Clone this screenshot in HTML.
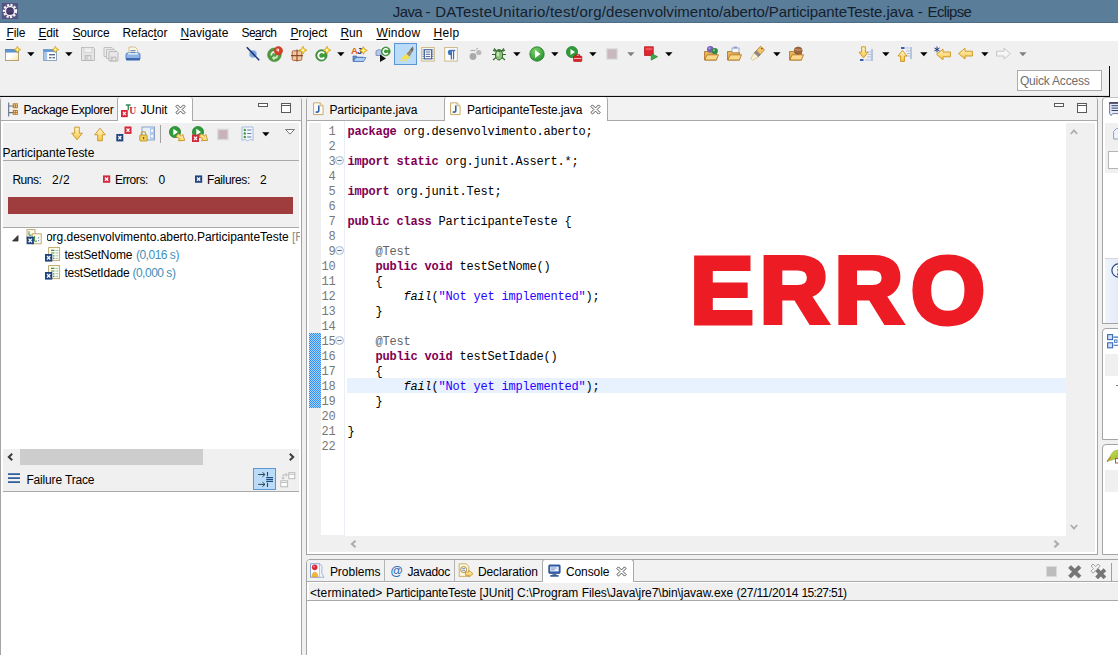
<!DOCTYPE html>
<html><head><meta charset="utf-8"><title>Java - Eclipse</title>
<style>
*{box-sizing:border-box;margin:0;padding:0}
html,body{width:1118px;height:655px;overflow:hidden;background:#f0f0f0}
body{position:relative;font-family:"Liberation Sans",sans-serif;font-size:12px;color:#000}
.a{position:absolute}
svg{overflow:visible}
.t{position:absolute;white-space:nowrap;line-height:16px;height:16px}
u{text-decoration:underline;text-underline-offset:1.5px;text-decoration-thickness:1px}
.c{position:absolute;white-space:pre;font-family:"Liberation Mono",monospace;font-size:12px;letter-spacing:-0.2px;line-height:15px;height:15px;color:#000}
.c b{color:#7f0055}
.c i{color:#000}
.c s{color:#2a00ff;text-decoration:none}
.c em{color:#646464;font-style:normal}
.n{color:#787878}
</style></head><body>
<svg width="0" height="0" style="position:absolute"><defs><linearGradient id="gy" x1="0" y1="0" x2="0" y2="1"><stop offset="0" stop-color="#fff8cc"/><stop offset="1" stop-color="#f7c544"/></linearGradient></defs></svg>
<!-- title -->
<div class="a" style="left:0px;top:0px;width:1118px;height:23px;background:#5a7d9a;border-bottom:1px solid #4d6d86"></div>
<svg class="a" style="left:2px;top:3px;" width="16" height="16" viewBox="0 0 19 19"><rect x="0" y="0" width="19" height="19" fill="#54467f" opacity=".8"/><circle cx="9.5" cy="9.5" r="7.2" fill="none" stroke="#f4f4f4" stroke-width="2.6" stroke-dasharray="2.6 1.6"/><circle cx="9.5" cy="9.5" r="6.2" fill="#efefef"/><circle cx="9.5" cy="9.5" r="4.6" fill="#3a2f5e"/><path d="M5.5 8.5h8M5.5 10.5h8" stroke="#6a5a9a" stroke-width=".8"/></svg>
<div class="t" style="left:392.8px;top:2.5px;font-size:15px;color:#15202b;line-height:18px;height:18px;"><span style="letter-spacing:-0.612px">Java </span><span style="letter-spacing:0.214px">- </span><span style="letter-spacing:0.211px">DATesteUnitario/test/org/</span><span style="letter-spacing:0.028px">desenvolvimento</span><span style="letter-spacing:-0.158px">/aberto</span><span style="letter-spacing:-0.087px">/ParticipanteTeste.java </span><span style="letter-spacing:0.364px">- </span><span style="letter-spacing:-0.680px">Eclipse</span></div>
<!-- menu -->
<div class="a" style="left:0px;top:23px;width:1118px;height:18px;background:#fff"></div>
<div class="t" style="left:6.4px;top:25px;letter-spacing:-0.090px;"><u>F</u>ile</div>
<div class="t" style="left:38.4px;top:25px;letter-spacing:-0.176px;"><u>E</u>dit</div>
<div class="t" style="left:72.4px;top:25px;letter-spacing:-0.174px;"><u>S</u>ource</div>
<div class="t" style="left:122.4px;top:25px;letter-spacing:-0.047px;">Refac<u>t</u>or</div>
<div class="t" style="left:180.4px;top:25px;letter-spacing:0.078px;"><u>N</u>avigate</div>
<div class="t" style="left:241.4px;top:25px;letter-spacing:-0.508px;">Se<u>a</u>rch</div>
<div class="t" style="left:290.4px;top:25px;letter-spacing:-0.051px;"><u>P</u>roject</div>
<div class="t" style="left:340.4px;top:25px;letter-spacing:-0.010px;"><u>R</u>un</div>
<div class="t" style="left:376.4px;top:25px;letter-spacing:0.219px;"><u>W</u>indow</div>
<div class="t" style="left:433.4px;top:25px;letter-spacing:0.328px;"><u>H</u>elp</div>
<!-- toolbar -->
<div class="a" style="left:394px;top:43px;width:23px;height:22px;background:#badcf9;border:1px solid #5b96d2"></div>
<svg class="a" style="left:397.5px;top:46px;" width="16" height="16" viewBox="0 0 16 16"><path d="M14.8 .6L8.4 8l3.2 2.8L15.6 3.2z" fill="#948a7c"/><path d="M14.8 .6l-2.8 3.2 2.9 2z" fill="#6d665e"/><path d="M8.4 8L2.6 12.6l7.6 1 1.6-2.8z" fill="#f6e14a"/><path d="M.8 14.6q4-1 8 .2" stroke="#eadf80" stroke-width="1.4" fill="none"/></svg>
<svg class="a" style="left:5px;top:46px;" width="16" height="16" viewBox="0 0 16 16"><defs><linearGradient id="gnw" x1="0" y1="0" x2="1" y2="1"><stop offset=".5" stop-color="#fff"/><stop offset="1" stop-color="#f6e3a6"/></linearGradient></defs><rect x=".5" y="3.5" width="13" height="11" fill="url(#gnw)" stroke="#b9a16a"/><rect x=".5" y="3.5" width="13" height="2.6" fill="#5e96d6" stroke="#4a7fc0" stroke-width=".6"/><path d="M12.4 3.6m0-3.4l1.1 2.3 2.3 1.1-2.3 1.1-1.1 2.3-1.1-2.3-2.3-1.1 2.3-1.1z" fill="#fbdf45" stroke="#c79a1e" stroke-width=".7"/><circle cx="12.4" cy="3.6" r=".9" fill="#fffbe0"/></svg>
<svg class="a" style="left:43px;top:46px;" width="16" height="16" viewBox="0 0 16 16"><rect x=".5" y="3.5" width="13" height="11" fill="#fff" stroke="#8fa6c4"/><rect x=".5" y="3.5" width="13" height="2.4" fill="#5e96d6"/><rect x="1" y="6" width="3.2" height="8" fill="#a9c6ea"/><rect x="6" y="8" width="6" height="1.4" fill="#5a6f8f"/><rect x="6" y="11" width="2.5" height="1.4" fill="#5a6f8f"/><rect x="9.5" y="11" width="2.5" height="1.4" fill="#5a6f8f"/><path d="M12.4 3.6m0-3.4l1.1 2.3 2.3 1.1-2.3 1.1-1.1 2.3-1.1-2.3-2.3-1.1 2.3-1.1z" fill="#fbdf45" stroke="#c79a1e" stroke-width=".7"/><circle cx="12.4" cy="3.6" r=".9" fill="#fffbe0"/></svg>
<svg class="a" style="left:79.5px;top:46px;" width="16" height="16" viewBox="0 0 16 16"><path d="M1.5 1.5h12l1 1v12h-13z" fill="#e7e7e7" stroke="#bababa"/><rect x="4" y="1.8" width="8" height="5" fill="#efefef" stroke="#c2c2c2" stroke-width=".6"/><rect x="5" y="9.5" width="6" height="5" fill="#d0d0d0" stroke="#b0b0b0" stroke-width=".6"/><rect x="8.5" y="10.5" width="1.6" height="3" fill="#f0f0f0"/></svg>
<svg class="a" style="left:103px;top:46px;" width="16" height="16" viewBox="0 0 16 16"><path d="M1 1.5h8l1 1v8h-9z" fill="#eaeaea" stroke="#c0c0c0"/><path d="M3.5 3.5h8l1 1v8h-9z" fill="#eaeaea" stroke="#c0c0c0"/><path d="M6 5.5h8l1 1v8.5h-9z" fill="#e7e7e7" stroke="#bababa"/><rect x="8" y="11" width="5" height="4" fill="#cfcfcf" stroke="#b0b0b0" stroke-width=".6"/><rect x="10.5" y="12" width="1.4" height="2.4" fill="#f0f0f0"/></svg>
<svg class="a" style="left:124.5px;top:46px;" width="16" height="16" viewBox="0 0 16 16"><path d="M4 1h6l2.5 2.5V8H4z" fill="#fdf6e3" stroke="#c9b27a" stroke-width=".8"/><rect x="5.5" y="4" width="5" height="1.2" fill="#6a8fc4"/><rect x="5.5" y="6" width="5" height="1.2" fill="#6a8fc4"/><path d="M1 8.5q0-1.5 1.5-1.5h11q1.5 0 1.5 1.5V13H1z" fill="#8fb4e6" stroke="#4571b3" stroke-width=".8"/><rect x="1" y="12" width="14" height="2.6" rx="1.2" fill="#3e68ad"/><rect x="3.2" y="7" width="9.6" height="1.6" fill="#dfeaf8"/></svg>
<svg class="a" style="left:245px;top:46px;" width="16" height="16" viewBox="0 0 16 16"><circle cx="8" cy="8" r="3.6" fill="#7aa7d8" stroke="#9fc0e6" stroke-width=".8"/><path d="M1.8 1.2L14.2 14.2" stroke="#1c2f7a" stroke-width="1.5"/></svg>
<svg class="a" style="left:267px;top:46px;" width="16" height="16" viewBox="0 0 16 16"><circle cx="7.4" cy="8.8" r="6.8" fill="#4f9a3a" stroke="#3c7f2b" stroke-width=".6"/><path d="M3.4 9.4a4 4 0 0 1 4-4.4v-1.4l2.6 2.4-2.6 2.4V7a2.2 2.2 0 0 0-2.2 2.4z" fill="#e8f4e0"/><path d="M11.4 8.6a4 4 0 0 1-4 4.4v1.4L4.8 12l2.6-2.4V11a2.2 2.2 0 0 0 2.2-2.4z" fill="#cfe8c0"/><circle cx="11.4" cy="4.8" r="4.2" fill="#d8402a" stroke="#b02a18" stroke-width=".5"/><circle cx="10.6" cy="3.8" r="1.5" fill="#f7a08c"/><path d="M11.4 3v2.6" stroke="#fff" stroke-width=".9"/></svg>
<svg class="a" style="left:291px;top:46px;" width="16" height="16" viewBox="0 0 16 16"><rect x="1.2" y="4.8" width="9.6" height="9.6" rx="1.2" fill="#f0c9a0" stroke="#b0683a" stroke-width="1"/><path d="M6 3.6v12M0 9.6h12" stroke="#8a4a2a" stroke-width="1.1"/><path d="M12 4.2m0-3.9l1.3 2.6 2.6 1.3-2.6 1.3-1.3 2.6-1.3-2.6-2.6-1.3 2.6-1.3z" fill="#fbdf45" stroke="#c79a1e" stroke-width=".7"/><circle cx="12" cy="4.2" r="1" fill="#fffbe0"/></svg>
<svg class="a" style="left:314.5px;top:46px;" width="16" height="16" viewBox="0 0 16 16"><circle cx="6.4" cy="9.4" r="5.6" fill="#3f9a3c" stroke="#2c7a2d" stroke-width=".8"/><path d="M9.2 7.4A3.3 3.3 0 1 0 9.2 11.4" fill="none" stroke="#fff" stroke-width="1.9"/><path d="M12 4.2m0-3.9l1.3 2.6 2.6 1.3-2.6 1.3-1.3 2.6-1.3-2.6-2.6-1.3 2.6-1.3z" fill="#fbdf45" stroke="#c79a1e" stroke-width=".7"/><circle cx="12" cy="4.2" r="1" fill="#fffbe0"/></svg>
<svg class="a" style="left:351px;top:46px;" width="16" height="16" viewBox="0 0 16 16"><text x="0" y="8.4" font-family="Liberation Sans,sans-serif" font-weight="bold" font-size="9.5" fill="#e0601a">A<tspan fill="#26407a" dx="-.8">J</tspan></text><path d="M2 10h3.5l1 1.2H12.4V15.4H2z" fill="#5d8fd4" stroke="#3b69b0" stroke-width=".7"/><path d="M2.4 15.4l2.4-3.8H15l-2.4 3.8z" fill="#b4d2f5" stroke="#3b69b0" stroke-width=".7"/><path d="M12.4 4.4m0-3.9l1.3 2.6 2.6 1.3-2.6 1.3-1.3 2.6-1.3-2.6-2.6-1.3 2.6-1.3z" fill="#fbdf45" stroke="#c79a1e" stroke-width=".7"/><circle cx="12.4" cy="4.4" r="1" fill="#fffbe0"/></svg>
<svg class="a" style="left:375px;top:46px;" width="16" height="16" viewBox="0 0 16 16"><path d="M1 5l3-1.6 3 1.6v4.5H1z" fill="#b7c7e6" stroke="#6e86bd" stroke-width=".8"/><path d="M5 8.5l6 4-6 3.5z" fill="#111"/><circle cx="10.8" cy="5.4" r="4.4" fill="#3f9a3c" stroke="#2c7a2d" stroke-width=".6"/><path d="M12.9 3.9A2.6 2.6 0 1 0 12.9 6.9" fill="none" stroke="#fff" stroke-width="1.5"/></svg>
<svg class="a" style="left:468px;top:46px;" width="16" height="16" viewBox="0 0 16 16"><circle cx="5" cy="10.5" r="3.4" fill="#a9a9a9"/><circle cx="10.8" cy="6.5" r="2.6" fill="#b9b9b9"/><path d="M2.5 4.5h5" stroke="#b0b0b0" stroke-width="1.3"/><path d="M8 3.5l2-1.5" stroke="#b9b9b9" stroke-width="1.2"/></svg>
<svg class="a" style="left:490.5px;top:46px;" width="16" height="16" viewBox="0 0 16 16"><path d="M3 2.5l3 3M13 2.5l-3 3M1 8.5h4M15 8.5h-4M2 14l3.5-3M14 14l-3.5-3M4.5 5.5L2 4M11.5 5.5l2.5-1.5" stroke="#2f6a2a" stroke-width="1.1" fill="none"/><ellipse cx="8" cy="9" rx="3.6" ry="5" fill="#8fc27a" stroke="#2f6a2a" stroke-width="1"/><ellipse cx="8" cy="4.6" rx="2.2" ry="1.6" fill="#3e7a35"/><ellipse cx="7" cy="8" rx="1.2" ry="2.4" fill="#c6e3b8"/></svg>
<svg class="a" style="left:528.5px;top:46px;" width="16" height="16" viewBox="0 0 16 16"><defs><radialGradient id="grn" cx=".4" cy=".3" r=".8"><stop offset="0" stop-color="#7fd06a"/><stop offset="1" stop-color="#1e8a2a"/></radialGradient></defs><circle cx="8" cy="8" r="7.2" fill="url(#grn)" stroke="#1f7a28" stroke-width=".8"/><path d="M6 4l5.5 4L6 12z" fill="#fff"/></svg>
<svg class="a" style="left:566px;top:46px;" width="16" height="16" viewBox="0 0 16 16"><circle cx="6" cy="6" r="5.6" fill="#2f9a38" stroke="#1f7a28" stroke-width=".7"/><path d="M4.5 3l4.5 3-4.5 3z" fill="#fff"/><rect x="7.5" y="10" width="8.3" height="5.5" rx=".8" fill="#d8262a" stroke="#a01418" stroke-width=".6"/><path d="M9.8 10V8.8h3.6V10" fill="none" stroke="#c01c20" stroke-width="1.1"/><rect x="8" y="12" width="7.2" height="1" fill="#f3b0b0"/></svg>
<svg class="a" style="left:604px;top:46px;" width="16" height="16" viewBox="0 0 16 16"><rect x="2.8" y="2.8" width="10.4" height="10.4" fill="#c7b9bd" stroke="#dcdcdc" stroke-width="1.2"/></svg>
<svg class="a" style="left:644px;top:46px;" width="16" height="16" viewBox="0 0 16 16"><rect x=".6" y=".8" width="8.6" height="8.6" fill="#e0252e" stroke="#b8141c" stroke-width=".8"/><rect x="1.6" y="1.8" width="6.6" height="2.4" fill="#f0555c"/><path d="M7.2 7.4l6.4 3.3-6.4 3.5z" fill="#3aa84a" stroke="#1f7a28" stroke-width=".6"/></svg>
<svg class="a" style="left:858px;top:46px;" width="16" height="16" viewBox="0 0 16 16"><path d="M14 3v12" stroke="#7f9cc8" stroke-width="1"/><path d="M9 6h4M10 8.5h3M9 11h4" stroke="#a9c0e2" stroke-width="1"/><rect x="2" y="13" width="3.5" height="2" fill="#3b5fa8"/><path d="M7 14h6" stroke="#a9c0e2"/><path d="M3.6 .8h3.8v5.4h2.6l-4.5 5.6L1 6.2h2.6z" fill="url(#gy)" stroke="#c8921c" stroke-width=".9" stroke-linejoin="round"/></svg>
<svg class="a" style="left:896.5px;top:46px;" width="16" height="16" viewBox="0 0 16 16"><path d="M14 1v12" stroke="#7f9cc8" stroke-width="1"/><path d="M9 5h4M10 7.5h3M9 10h4" stroke="#a9c0e2" stroke-width="1"/><rect x="4" y="1" width="3.5" height="2" fill="#3b5fa8"/><path d="M8.5 2h4" stroke="#a9c0e2"/><path d="M3.6 15.4h3.8V10h2.6L5.5 4.4 1 10h2.6z" fill="url(#gy)" stroke="#c8921c" stroke-width=".9" stroke-linejoin="round"/></svg>
<svg class="a" style="left:934px;top:46px;" width="16" height="16" viewBox="0 0 16 16"><path d="M9 3l-6.4 5.4 6.4 5.4v-3h7.4v-4.8h-7.4z" fill="url(#gy)" stroke="#c8921c" stroke-width=".9" stroke-linejoin="round"/><path d="M3 .5v6M.4 2l5.2 3M5.6 2L.4 5" stroke="#243c78" stroke-width="1"/></svg>
<svg class="a" style="left:958px;top:46px;" width="16" height="16" viewBox="0 0 16 16"><path d="M7 2.2l-6.4 5.4 6.4 5.4v-3h7.4v-4.8h-7.4z" fill="url(#gy)" stroke="#c8921c" stroke-width=".9" stroke-linejoin="round"/></svg>
<svg class="a" style="left:996px;top:46px;" width="16" height="16" viewBox="0 0 16 16"><path d="M8 2.2l6.4 5.4-6.4 5.4v-3h-7.4v-4.8h7.4z" fill="#f6f6f6" stroke="#c2c2c2" stroke-width=".9" stroke-linejoin="round"/></svg>
<svg class="a" style="left:703px;top:45px;" width="16" height="16" viewBox="0 0 16 16"><path d="M1.5 6.5h4l1.2 1.3h6.8V15H1.5z" fill="#e9b55a" stroke="#a96f1e" stroke-width=".8"/><path d="M1.8 15l2.3-5.2H15.5L13.4 15z" fill="#fbd88a" stroke="#a96f1e" stroke-width=".8"/><circle cx="7.3" cy="4.2" r="3.3" fill="#7a5fb5"/><circle cx="6.5" cy="3.3" r="1.1" fill="#b6a3de"/><circle cx="11.8" cy="6" r="3.1" fill="#2f8a4a"/><circle cx="11" cy="5.2" r="1" fill="#8fd0a0"/></svg>
<svg class="a" style="left:725.5px;top:45px;" width="16" height="16" viewBox="0 0 16 16"><rect x="6" y="3" width="7" height="6" fill="#f4f7fc" stroke="#8a9cc0" stroke-width=".8"/><rect x="7.5" y="1.6" width="3.5" height="1.8" fill="#8a9cc0"/><path d="M1.5 6.5h4l1.2 1.3h6.8V15H1.5z" fill="#e9b55a" stroke="#a96f1e" stroke-width=".8"/><path d="M1.8 15l2.3-5.2H15.5L13.4 15z" fill="#fbd88a" stroke="#a96f1e" stroke-width=".8"/></svg>
<svg class="a" style="left:750px;top:45px;" width="16" height="16" viewBox="0 0 16 16"><path d="M10.5 1.2l4 3.6-6.3 7-4-3.6z" fill="#f4c46a" stroke="#b07a28" stroke-width=".8"/><path d="M6.2 5.8l4 3.6-2 2.4-4-3.6z" fill="#8c8c8c" stroke="#666" stroke-width=".5"/><path d="M4.2 8.2l4 3.6-5.6 3.4-1.8-1.6z" fill="#fbf4d8" stroke="#c9b27a" stroke-width=".7"/><circle cx="11.8" cy="3.6" r=".8" fill="#7a4a10"/></svg>
<svg class="a" style="left:787.5px;top:45px;" width="16" height="16" viewBox="0 0 16 16"><path d="M1.5 6.5h4l1.2 1.3h6.8V15H1.5z" fill="#e9b55a" stroke="#a96f1e" stroke-width=".8"/><path d="M1.8 15l2.3-5.2H15.5L13.4 15z" fill="#fbd88a" stroke="#a96f1e" stroke-width=".8"/><ellipse cx="10.2" cy="5.6" rx="4" ry="3.6" fill="#a0673c" stroke="#7a4722" stroke-width=".6"/><path d="M7 4.5q3 1 6.8.2" stroke="#d9a77c" stroke-width=".9" fill="none"/></svg>
<svg class="a" style="left:421px;top:47px;" width="14" height="14.6" viewBox="0 0 15 16"><rect x=".6" y=".6" width="13.8" height="14.8" fill="#fdfbf3" stroke="#cdb98a" stroke-width="1.1"/><rect x="3.5" y="3" width="8" height="10" fill="#fff" stroke="#3a5a94" stroke-width="1.2"/><path d="M5 5.5h5M5 8h5M5 10.5h5" stroke="#3a5a94" stroke-width="1"/><path d="M2.2 2.5v11M12.8 2.5v11" stroke="#3a5a94" stroke-width="1" stroke-dasharray="1.2 1.2"/></svg>
<svg class="a" style="left:444px;top:47px;" width="14" height="14.6" viewBox="0 0 15 16"><rect x=".6" y=".6" width="13.8" height="14.8" fill="#fff" stroke="#cdb98a" stroke-width="1.1"/><path d="M6.8 3h5.4v1.6h-1.2v9H9.6v-9H8.6v9H7.2V9a3 3 0 0 1-.4-6z" fill="#3f74b8"/></svg>
<svg class="a" style="left:27px;top:52px;" width="8" height="5" viewBox="0 0 8 5"><path d="M0.2 0.3h7.3L3.85 4.2z" fill="#000"/></svg>
<svg class="a" style="left:65px;top:52px;" width="8" height="5" viewBox="0 0 8 5"><path d="M0.2 0.3h7.3L3.85 4.2z" fill="#000"/></svg>
<svg class="a" style="left:337px;top:52px;" width="8" height="5" viewBox="0 0 8 5"><path d="M0.2 0.3h7.3L3.85 4.2z" fill="#000"/></svg>
<svg class="a" style="left:513px;top:52px;" width="8" height="5" viewBox="0 0 8 5"><path d="M0.2 0.3h7.3L3.85 4.2z" fill="#000"/></svg>
<svg class="a" style="left:551px;top:52px;" width="8" height="5" viewBox="0 0 8 5"><path d="M0.2 0.3h7.3L3.85 4.2z" fill="#000"/></svg>
<svg class="a" style="left:589px;top:52px;" width="8" height="5" viewBox="0 0 8 5"><path d="M0.2 0.3h7.3L3.85 4.2z" fill="#000"/></svg>
<svg class="a" style="left:665px;top:52px;" width="8" height="5" viewBox="0 0 8 5"><path d="M0.2 0.3h7.3L3.85 4.2z" fill="#000"/></svg>
<svg class="a" style="left:773px;top:52px;" width="8" height="5" viewBox="0 0 8 5"><path d="M0.2 0.3h7.3L3.85 4.2z" fill="#000"/></svg>
<svg class="a" style="left:882px;top:52px;" width="8" height="5" viewBox="0 0 8 5"><path d="M0.2 0.3h7.3L3.85 4.2z" fill="#000"/></svg>
<svg class="a" style="left:920px;top:52px;" width="8" height="5" viewBox="0 0 8 5"><path d="M0.2 0.3h7.3L3.85 4.2z" fill="#000"/></svg>
<svg class="a" style="left:981px;top:52px;" width="8" height="5" viewBox="0 0 8 5"><path d="M0.2 0.3h7.3L3.85 4.2z" fill="#000"/></svg>
<svg class="a" style="left:627px;top:52px;" width="8" height="5" viewBox="0 0 8 5"><path d="M0.2 0.3h7.3L3.85 4.2z" fill="#808080"/></svg>
<svg class="a" style="left:1019px;top:52px;" width="8" height="5" viewBox="0 0 8 5"><path d="M0.2 0.3h7.3L3.85 4.2z" fill="#808080"/></svg>
<div class="a" style="left:1017px;top:70px;width:85px;height:21px;background:#fff;border:1px solid #ababab"></div>
<div class="t" style="left:1020px;top:72.5px;color:#6d6d6d;letter-spacing:-0.211px;">Quick Access</div>
<div class="a" style="left:0px;top:95px;width:1109px;height:1px;background:#dcdcdc"></div>
<div class="a" style="left:0px;top:96px;width:1110px;height:1px;background:#0c0c0c"></div>
<div class="a" style="left:1109px;top:66px;width:1px;height:31px;background:#0c0c0c"></div>
<!-- left: junit view -->
<div class="a" style="left:0px;top:97px;width:302px;height:560px;background:#fff;border:1px solid #a4a4a4;border-top:none;border-radius:4px 4px 0 0"></div>
<div class="a" style="left:3px;top:123px;width:296px;height:369px;background:#f0f0f0"></div>
<div class="a" style="left:1px;top:97px;width:300px;height:23px;background:#f2f2f2;border-radius:3px 3px 0 0"></div>
<div class="a" style="left:1px;top:120px;width:300px;height:1px;background:#a9a9a9"></div>
<div class="a" style="left:117px;top:97px;width:76px;height:24px;background:#fff;border:1px solid #a9a9a9;border-top:none;border-bottom:none;border-radius:3px 3px 0 0"></div>
<svg class="a" style="left:6.8px;top:101.6px;" width="13" height="15" viewBox="0 0 12 14"><path d="M1.5 .5v13M1.5 3.7h4M1.5 9.9h4" stroke="#5f6f86" stroke-width="1" fill="none"/><rect x="5.3" y="1.2" width="4.8" height="4.6" fill="#b87a2c"/><path d="M6.3 2.2h1v1h-1zM8.2 2.2h1v1h-1zM6.3 4h1v1h-1zM8.2 4h1v1h-1z" fill="#f6dca0"/><rect x="5.3" y="7.4" width="4.8" height="4.6" fill="#b87a2c"/><path d="M6.3 8.4h1v1h-1zM8.2 8.4h1v1h-1zM6.3 10.2h1v1h-1zM8.2 10.2h1v1h-1z" fill="#f6dca0"/></svg>
<div class="t" style="left:23.4px;top:101.5px;letter-spacing:-0.295px;">Package Explorer</div>
<svg class="a" style="left:121px;top:103.5px;" width="15.5" height="15.5" viewBox="0 0 16 16"><text x="8.6" y="10.5" font-family="Liberation Serif,serif" font-weight="bold" font-size="10" fill="#c4284a">U</text><path d="M5 1h5M7.5 1v5.5" stroke="#2f8a5a" stroke-width="1.4"/><rect x="0" y="6.2" width="7" height="7.4" fill="#d3283a"/><path d="M2 8.2l3 3.4m0-3.4l-3 3.4" stroke="#fff" stroke-width="1.2"/></svg>
<div class="t" style="left:140.4px;top:101.5px;letter-spacing:-0.069px;">JUnit</div>
<svg class="a" style="left:174.5px;top:103.5px;" width="11" height="11" viewBox="0 0 11 11"><path d="M.9 2.5L2.5 .9 5.5 3.9 8.5 .9 10.1 2.5 7.1 5.5 10.1 8.5 8.5 10.1 5.5 7.1 2.5 10.1 .9 8.5 3.9 5.5z" fill="#fff" stroke="#484848" stroke-width=".95"/></svg>
<div class="a" style="left:258px;top:103px;width:10px;height:4px;border:1px solid #5a5a5a;background:#fff"></div>
<div class="a" style="left:281px;top:103px;width:10px;height:10px;border:1px solid #5a5a5a;background:#fff"></div>
<div class="a" style="left:281px;top:105px;width:10px;height:1px;background:#5a5a5a"></div>
<svg class="a" style="left:68.7px;top:126px;" width="16" height="16" viewBox="0 0 16 16"><path d="M5.7 1.2h4.6v6h3l-5.3 6.6-5.3-6.6h3z" fill="url(#gy)" stroke="#c8921c" stroke-width=".9" stroke-linejoin="round"/></svg>
<svg class="a" style="left:91.7px;top:126px;" width="16" height="16" viewBox="0 0 16 16"><path d="M5.7 14.8h4.6v-6h3l-5.3-6.6-5.3 6.6h3z" fill="url(#gy)" stroke="#c8921c" stroke-width=".9" stroke-linejoin="round"/></svg>
<svg class="a" style="left:115.5px;top:125.5px;" width="16" height="16" viewBox="0 0 16 16"><rect x="0.3" y="8" width="7" height="7.4" fill="#1f447f"/><path d="M2.3 10l3 3.4m0-3.4l-3 3.4" stroke="#fff" stroke-width="1.2"/><rect x="8.5" y="0.5" width="7" height="7.4" fill="#d3283a"/><path d="M10.5 2.5l3 3.4m0-3.4l-3 3.4" stroke="#fff" stroke-width="1.2"/></svg>
<svg class="a" style="left:138.5px;top:126px;" width="16" height="16" viewBox="0 0 16 16"><rect x="3" y="1" width="12.5" height="13" fill="#e8f0fb" stroke="#7f9bc8" stroke-width=".9"/><rect x="11" y="1.4" width="4" height="12.2" fill="#b4c8ea"/><rect x="12" y="3.5" width="2" height="2.4" fill="#fff"/><rect x="12" y="9" width="2" height="2.4" fill="#fff"/><rect x=".8" y="9" width="7.4" height="6" rx=".8" fill="#f3cf5a" stroke="#b88a1a" stroke-width=".8"/><path d="M2.4 9V7.6a2.1 2.1 0 0 1 4.2 0V9" fill="none" stroke="#c9a030" stroke-width="1.2"/><rect x="4" y="11" width="1.2" height="2.2" fill="#7a5a10"/></svg>
<div class="a" style="left:160px;top:125px;width:1px;height:18px;background:#a0a0a0"></div>
<svg class="a" style="left:168.5px;top:125.5px;" width="16" height="16" viewBox="0 0 16 16"><circle cx="6" cy="6" r="5.6" fill="#2f9a38" stroke="#1f7a28" stroke-width=".7"/><path d="M4.3 2.8l4.7 3.2-4.7 3.2z" fill="#fff"/><path d="M7.6 9.4h4.2V7.2l5 3.9-5 3.9v-2.2H7.6z" fill="url(#gy)" stroke="#c8921c" stroke-width=".8" stroke-linejoin="round" transform="rotate(35 11 11)"/></svg>
<svg class="a" style="left:191.5px;top:125.5px;" width="16" height="16" viewBox="0 0 16 16"><circle cx="6" cy="6" r="5.6" fill="#2f9a38" stroke="#1f7a28" stroke-width=".7"/><path d="M4.3 2.8l4.7 3.2-4.7 3.2z" fill="#fff"/><rect x="0" y="8.6" width="7" height="7.4" fill="#d3283a"/><path d="M2 10.6l3 3.4m0-3.4l-3 3.4" stroke="#fff" stroke-width="1.2"/><path d="M7.6 9.4h4.2V7.2l5 3.9-5 3.9v-2.2H7.6z" fill="url(#gy)" stroke="#c8921c" stroke-width=".8" stroke-linejoin="round" transform="rotate(35 11 11)"/></svg>
<svg class="a" style="left:215px;top:126px;" width="16" height="16" viewBox="0 0 16 16"><rect x="2.8" y="3.4" width="10.2" height="10.2" fill="#c9b3b8" stroke="#d9d9d9" stroke-width="1.4"/></svg>
<svg class="a" style="left:239.5px;top:126px;" width="16" height="16" viewBox="0 0 16 16"><path d="M2 1h11v13.5l-2.5-1.2-3 1.5-3-1.5L2 14.5z" fill="#f4f8fd" stroke="#9fb6d6" stroke-width=".9"/><circle cx="4.8" cy="4" r="1.2" fill="#3f9a3c"/><circle cx="4.8" cy="7.5" r="1.2" fill="#3f9a3c"/><circle cx="4.8" cy="11" r="1.2" fill="#3f9a3c"/><path d="M7.2 4h4.2M7.2 7.5h4.2M7.2 11h4.2" stroke="#5a78a8" stroke-width="1"/></svg>
<svg class="a" style="left:261.5px;top:132px;" width="8" height="5" viewBox="0 0 8 5"><path d="M0.2 0.3h7.3L3.85 4.2z" fill="#000"/></svg>
<svg class="a" style="left:285px;top:129px;" width="10" height="6" viewBox="0 0 10 6"><path d="M.6 .5h8.8L5 5.2z" fill="#fff" stroke="#6a6a6a" stroke-width=".9"/></svg>
<div class="t" style="left:2.4px;top:145px;letter-spacing:-0.004px;">ParticipanteTeste</div>
<div class="a" style="left:3px;top:160px;width:296px;height:1px;background:#a9a9a9"></div>
<div class="t" style="left:12.4px;top:172px;letter-spacing:-0.472px;">Runs:</div>
<div class="t" style="left:51.9px;top:172px;letter-spacing:0.604px;">2/2</div>
<svg class="a" style="left:102.6px;top:175.2px;" width="7.2" height="8.2" viewBox="0 0 7.4 7.6"><rect x="0" y="0" width="7.4" height="7.6" fill="#d3283a"/><path d="M2 2.1l3.4 3.4m0-3.4L2 5.5" stroke="#fff" stroke-width="1.3"/></svg>
<div class="t" style="left:114.9px;top:172px;letter-spacing:-0.429px;">Errors:</div>
<div class="t" style="left:158.4px;top:172px;letter-spacing:0.312px;">0</div>
<svg class="a" style="left:195px;top:175.2px;" width="7.2" height="8.2" viewBox="0 0 7.4 7.6"><rect x="0" y="0" width="7.4" height="7.6" fill="#1f447f"/><path d="M2 2.1l3.4 3.4m0-3.4L2 5.5" stroke="#fff" stroke-width="1.3"/></svg>
<div class="t" style="left:206.9px;top:172px;letter-spacing:-0.335px;">Failures:</div>
<div class="t" style="left:259.9px;top:172px;letter-spacing:0.312px;">2</div>
<div class="a" style="left:8px;top:197px;width:285px;height:17px;background:#9f3d3e"></div>
<div class="a" style="left:3px;top:227px;width:296px;height:1px;background:#a9a9a9"></div>
<div class="a" style="left:3px;top:228px;width:296px;height:221px;background:#fff"></div>
<svg class="a" style="left:12px;top:235px;" width="7" height="7" viewBox="0 0 7 7"><path d="M6 .6V6H.6z" fill="#404040" stroke="#262626" stroke-width=".8"/></svg>
<svg class="a" style="left:25.5px;top:228.6px;" width="16" height="16" viewBox="0 0 16 16"><rect x="1" y=".6" width="8" height="9" fill="#fffdf0" stroke="#b9a362" stroke-width=".9"/><path d="M3 2.2v4h2.6" stroke="#3c8a4a" stroke-width="1" fill="none"/><rect x="6.2" y="4.8" width="9" height="10" fill="#fffdf0" stroke="#b9a362" stroke-width=".9"/><path d="M8.6 7v5.2h2.4" stroke="#3c8a4a" stroke-width="1" fill="none"/><path d="M12.6 8.2v1.2M12.6 11v1.2" stroke="#5c8ad0" stroke-width="1.1"/><rect x="0.6" y="7.6" width="7.3" height="7.6" fill="#1f447f"/><path d="M2.6 9.6l3.3 3.6m0-3.6l-3.3 3.6" stroke="#fff" stroke-width="1.3"/></svg>
<div class="a" style="left:46.5px;top:229px;width:253px;height:16px;overflow:hidden">
<div class="t" style="left:-0.6px;top:0px;letter-spacing:-0.016px;">org.desenvolvimento.aberto.ParticipanteTeste</div>
<div class="t" style="left:245.4px;top:0px;color:#8a8a8a;">[Runner: JUnit 4] (0,016 s)</div>
</div>
<svg class="a" style="left:45px;top:247px;" width="16" height="16" viewBox="0 0 16 16"><rect x="3.6" y=".6" width="11" height="13" fill="#fffdf0" stroke="#b9a362" stroke-width=".9"/><path d="M6 3.4h3.4M6 6h3.4M8 8.8h1.4M8 11.4h1.4" stroke="#3f8f4f" stroke-width="1.2"/><path d="M10.6 3.4h2.6M10.6 6h2.6M10.6 8.8h2.6M10.6 11.4h2.6" stroke="#6fae8a" stroke-width="1" stroke-dasharray="1 .6"/><rect x="0" y="7" width="7.3" height="7.6" fill="#1f447f"/><path d="M2 9l3.3 3.6m0-3.6l-3.3 3.6" stroke="#fff" stroke-width="1.3"/></svg>
<div class="t" style="left:64.4px;top:247px;letter-spacing:-0.125px;">testSetNome</div>
<div class="t" style="left:135.9px;top:247px;color:#3f8fb8;letter-spacing:-0.484px;">(0,016 s)</div>
<svg class="a" style="left:45px;top:265px;" width="16" height="16" viewBox="0 0 16 16"><rect x="3.6" y=".6" width="11" height="13" fill="#fffdf0" stroke="#b9a362" stroke-width=".9"/><path d="M6 3.4h3.4M6 6h3.4M8 8.8h1.4M8 11.4h1.4" stroke="#3f8f4f" stroke-width="1.2"/><path d="M10.6 3.4h2.6M10.6 6h2.6M10.6 8.8h2.6M10.6 11.4h2.6" stroke="#6fae8a" stroke-width="1" stroke-dasharray="1 .6"/><rect x="0" y="7" width="7.3" height="7.6" fill="#1f447f"/><path d="M2 9l3.3 3.6m0-3.6l-3.3 3.6" stroke="#fff" stroke-width="1.3"/></svg>
<div class="t" style="left:64.4px;top:265px;letter-spacing:-0.199px;">testSetIdade</div>
<div class="t" style="left:132.4px;top:265px;color:#3f8fb8;letter-spacing:-0.484px;">(0,000 s)</div>
<div class="a" style="left:3px;top:449px;width:296px;height:16px;background:#f0f0f0"></div>
<div class="a" style="left:20px;top:449px;width:183px;height:16px;background:#cdcdcd"></div>
<svg class="a" style="left:7px;top:452.5px;" width="7" height="8" viewBox="0 0 7 8"><path d="M5.2 .8L1.8 4l3.4 3.2" fill="none" stroke="#3c3c3c" stroke-width="2"/></svg>
<svg class="a" style="left:287.5px;top:452.5px;" width="7" height="8" viewBox="0 0 7 8"><path d="M1.8 .8L5.2 4 1.8 7.2" fill="none" stroke="#3c3c3c" stroke-width="2"/></svg>
<svg class="a" style="left:7.5px;top:473px;" width="12" height="11" viewBox="0 0 12 11"><path d="M0 1.2h12M0 5.2h12M0 9.2h12" stroke="#2f5f9a" stroke-width="1.7"/></svg>
<div class="t" style="left:26.4px;top:471.5px;letter-spacing:-0.156px;">Failure Trace</div>
<div class="a" style="left:253px;top:468px;width:23px;height:22px;background:#badcf9;border:1px solid #5b96d2"></div>
<svg class="a" style="left:256px;top:470px;" width="18" height="18" viewBox="0 0 18 18"><path d="M2.2 4.5h6.6M6.4 2.3l2.6 2.2-2.6 2.2M2.2 14.4h6.6M6.4 12.2l2.6 2.2-2.6 2.2" stroke="#2d4756" stroke-width="1" fill="none"/><path d="M11.5 2v4.2M11.5 12.8v4.2" stroke="#2d4756" stroke-width="1.1"/><path d="M10.2 7.6h6.8M10.2 9.5h6.8M10.2 11.4h6.8" stroke="#1d4d7e" stroke-width="1.1"/></svg>
<svg class="a" style="left:279px;top:471px;" width="17" height="17" viewBox="0 0 17 17"><rect x="9.8" y="1.7" width="6" height="6" fill="#fcfcfc" stroke="#b9b9b9" stroke-width="1"/><path d="M9.8 3.4h6" stroke="#c4c4c4"/><rect x="1.8" y="9.8" width="6.8" height="6" fill="#fcfcfc" stroke="#b9b9b9" stroke-width="1"/><path d="M1.8 11.5h6.8" stroke="#c4c4c4"/><path d="M4 8V3.8h4M6.6 2.2L8.4 3.8 6.6 5.4M2.6 6.6L4 8.2 5.4 6.6" stroke="#bdbdbd" stroke-width="1" fill="none"/></svg>
<div class="a" style="left:3px;top:491px;width:296px;height:1px;background:#a9a9a9"></div>
<div class="a" style="left:3px;top:492px;width:296px;height:163px;background:#fff"></div>
<!-- editor -->
<div class="a" style="left:306px;top:97px;width:792px;height:458px;background:#fff;border:1px solid #a4a4a4;border-top:none;border-radius:4px 4px 0 0"></div>
<div class="a" style="left:307px;top:97px;width:790px;height:23px;background:#f2f2f2;border-radius:3px 3px 0 0"></div>
<div class="a" style="left:307px;top:120px;width:790px;height:1px;background:#a9a9a9"></div>
<div class="a" style="left:444px;top:97px;width:164px;height:24px;background:#fff;border:1px solid #a9a9a9;border-top:none;border-bottom:none;border-radius:3px 3px 0 0"></div>
<svg class="a" style="left:313.3px;top:102.3px;" width="11" height="13.4" viewBox="0 0 12 14"><path d="M.6 .6h7.2l3.2 3.2v9.6H.6z" fill="#fdfaf0" stroke="#c7a368" stroke-width="1"/><path d="M7.8 .6v3.2H11" fill="#f3e2b8" stroke="#c7a368" stroke-width=".8"/><path d="M6.3 3.6v5.2q0 2-1.9 2-.8 0-1.4-.5" fill="none" stroke="#2f62ae" stroke-width="1.7"/></svg>
<div class="t" style="left:329.4px;top:101.5px;letter-spacing:-0.042px;">Participante.java</div>
<svg class="a" style="left:450px;top:102.3px;" width="11" height="13.4" viewBox="0 0 12 14"><path d="M.6 .6h7.2l3.2 3.2v9.6H.6z" fill="#fdfaf0" stroke="#c7a368" stroke-width="1"/><path d="M7.8 .6v3.2H11" fill="#f3e2b8" stroke="#c7a368" stroke-width=".8"/><path d="M6.3 3.6v5.2q0 2-1.9 2-.8 0-1.4-.5" fill="none" stroke="#2f62ae" stroke-width="1.7"/></svg>
<div class="t" style="left:466.9px;top:101.5px;letter-spacing:-0.087px;">ParticipanteTeste.java</div>
<svg class="a" style="left:589.5px;top:103.5px;" width="11" height="11" viewBox="0 0 11 11"><path d="M.9 2.5L2.5 .9 5.5 3.9 8.5 .9 10.1 2.5 7.1 5.5 10.1 8.5 8.5 10.1 5.5 7.1 2.5 10.1 .9 8.5 3.9 5.5z" fill="#fff" stroke="#484848" stroke-width=".95"/></svg>
<div class="a" style="left:1054px;top:103px;width:10px;height:4px;border:1px solid #5a5a5a;background:#fff"></div>
<div class="a" style="left:1077px;top:103px;width:10px;height:10px;border:1px solid #5a5a5a;background:#fff"></div>
<div class="a" style="left:1077px;top:105px;width:10px;height:1px;background:#5a5a5a"></div>
<div class="a" style="left:309px;top:123px;width:12px;height:429px;background:#f0f0f0"></div>
<div class="a" style="left:321px;top:535px;width:774px;height:17px;background:#f0f0f0"></div>
<div class="a" style="left:1066px;top:123px;width:29px;height:412px;background:#f0f0f0"></div>
<div class="a" style="left:345px;top:535px;width:721px;height:1px;background:#fff"></div>
<div class="a" style="left:344px;top:121px;width:1px;height:414px;background:#e9eef4"></div>
<div class="a" style="left:347px;top:378px;width:719px;height:15px;background:#e8f2fe"></div>
<svg class="a" style="left:309px;top:333px;" width="12" height="75" viewBox="0 0 12 75"><defs><pattern id="dots" width="2" height="2" patternUnits="userSpaceOnUse"><rect width="2" height="2" fill="#a8d4fb"/><rect width="1" height="1" fill="#2f8ff5"/><rect x="1" y="1" width="1" height="1" fill="#2f8ff5"/></pattern></defs><rect width="12" height="75" fill="url(#dots)"/></svg>
<div class="c n" style="left:321.5px;top:124.5px;width:14px;text-align:right">1</div>
<div class="c" style="left:347.5px;top:124.5px"><b>package</b> org.desenvolvimento.aberto;</div>
<div class="c n" style="left:321.5px;top:139.5px;width:14px;text-align:right">2</div>
<div class="c n" style="left:321.5px;top:154.5px;width:14px;text-align:right">3</div>
<div class="c" style="left:347.5px;top:154.5px"><b>import</b> <b>static</b> org.junit.Assert.*;</div>
<div class="c n" style="left:321.5px;top:169.5px;width:14px;text-align:right">4</div>
<div class="c n" style="left:321.5px;top:184.5px;width:14px;text-align:right">5</div>
<div class="c" style="left:347.5px;top:184.5px"><b>import</b> org.junit.Test;</div>
<div class="c n" style="left:321.5px;top:199.5px;width:14px;text-align:right">6</div>
<div class="c n" style="left:321.5px;top:214.5px;width:14px;text-align:right">7</div>
<div class="c" style="left:347.5px;top:214.5px"><b>public</b> <b>class</b> ParticipanteTeste {</div>
<div class="c n" style="left:321.5px;top:229.5px;width:14px;text-align:right">8</div>
<div class="c n" style="left:321.5px;top:244.5px;width:14px;text-align:right">9</div>
<div class="c" style="left:347.5px;top:244.5px">    <em>@Test</em></div>
<div class="c n" style="left:321.5px;top:259.5px;width:14px;text-align:right">10</div>
<div class="c" style="left:347.5px;top:259.5px">    <b>public</b> <b>void</b> testSetNome()</div>
<div class="c n" style="left:321.5px;top:274.5px;width:14px;text-align:right">11</div>
<div class="c" style="left:347.5px;top:274.5px">    {</div>
<div class="c n" style="left:321.5px;top:289.5px;width:14px;text-align:right">12</div>
<div class="c" style="left:347.5px;top:289.5px">        <i>fail</i>(<s>"Not yet implemented"</s>);</div>
<div class="c n" style="left:321.5px;top:304.5px;width:14px;text-align:right">13</div>
<div class="c" style="left:347.5px;top:304.5px">    }</div>
<div class="c n" style="left:321.5px;top:319.5px;width:14px;text-align:right">14</div>
<div class="c n" style="left:321.5px;top:334.5px;width:14px;text-align:right">15</div>
<div class="c" style="left:347.5px;top:334.5px">    <em>@Test</em></div>
<div class="c n" style="left:321.5px;top:349.5px;width:14px;text-align:right">16</div>
<div class="c" style="left:347.5px;top:349.5px">    <b>public</b> <b>void</b> testSetIdade()</div>
<div class="c n" style="left:321.5px;top:364.5px;width:14px;text-align:right">17</div>
<div class="c" style="left:347.5px;top:364.5px">    {</div>
<div class="c n" style="left:321.5px;top:379.5px;width:14px;text-align:right">18</div>
<div class="c" style="left:347.5px;top:379.5px">        <i>fail</i>(<s>"Not yet implemented"</s>);</div>
<div class="c n" style="left:321.5px;top:394.5px;width:14px;text-align:right">19</div>
<div class="c" style="left:347.5px;top:394.5px">    }</div>
<div class="c n" style="left:321.5px;top:409.5px;width:14px;text-align:right">20</div>
<div class="c n" style="left:321.5px;top:424.5px;width:14px;text-align:right">21</div>
<div class="c" style="left:347.5px;top:424.5px">}</div>
<div class="c n" style="left:321.5px;top:439.5px;width:14px;text-align:right">22</div>
<svg class="a" style="left:335.2px;top:156.4px;" width="9" height="9" viewBox="0 0 9 9"><circle cx="4.5" cy="4.5" r="4" fill="#f4f8fc" stroke="#9fb4cc" stroke-width=".9"/><path d="M2.3 4.5h4.4" stroke="#5c6f88" stroke-width="1"/></svg>
<svg class="a" style="left:335.2px;top:246.4px;" width="9" height="9" viewBox="0 0 9 9"><circle cx="4.5" cy="4.5" r="4" fill="#f4f8fc" stroke="#9fb4cc" stroke-width=".9"/><path d="M2.3 4.5h4.4" stroke="#5c6f88" stroke-width="1"/></svg>
<svg class="a" style="left:335.2px;top:336.4px;" width="9" height="9" viewBox="0 0 9 9"><circle cx="4.5" cy="4.5" r="4" fill="#f4f8fc" stroke="#9fb4cc" stroke-width=".9"/><path d="M2.3 4.5h4.4" stroke="#5c6f88" stroke-width="1"/></svg>
<svg class="a" style="left:1069.5px;top:129px;" width="8" height="6" viewBox="0 0 8 6"><path d="M.8 5L4 1.4 7.2 5" fill="none" stroke="#adadad" stroke-width="1.8"/></svg>
<svg class="a" style="left:1069.5px;top:524px;" width="8" height="6" viewBox="0 0 8 6"><path d="M.8 1L4 4.6 7.2 1" fill="none" stroke="#adadad" stroke-width="1.8"/></svg>
<svg class="a" style="left:349.5px;top:539.5px;" width="7" height="8" viewBox="0 0 7 8"><path d="M5.6 .8L2 4l3.6 3.2" fill="none" stroke="#adadad" stroke-width="2.2"/></svg>
<svg class="a" style="left:1053px;top:539.5px;" width="7" height="8" viewBox="0 0 7 8"><path d="M1.4 .8L5 4 1.4 7.2" fill="none" stroke="#adadad" stroke-width="2.2"/></svg>
<svg class="a" style="left:680px;top:240px" width="320" height="100" viewBox="680 240 320 100"><text x="690.2 759.8 834.4 911" y="322.5" font-family="Liberation Sans,sans-serif" font-weight="bold" font-size="95" fill="#ed1c24" stroke="#ed1c24" stroke-width="5" stroke-linejoin="miter">ERRO</text></svg>
<!-- bottom: console -->
<div class="a" style="left:306px;top:559px;width:815px;height:100px;background:#fff;border:1px solid #a4a4a4;border-radius:4px 0 0 0"></div>
<div class="a" style="left:307px;top:560px;width:811px;height:22px;background:#f2f2f2;border-radius:3px 0 0 0"></div>
<div class="a" style="left:309px;top:583px;width:809px;height:17px;background:#f0f0f0"></div>
<div class="a" style="left:307px;top:581px;width:811px;height:1px;background:#a9a9a9"></div>
<div class="a" style="left:307px;top:600px;width:811px;height:1px;background:#a9a9a9"></div>
<div class="a" style="left:384px;top:560px;width:1px;height:22px;background:#b4b4b4"></div>
<div class="a" style="left:454px;top:560px;width:1px;height:22px;background:#b4b4b4"></div>
<div class="a" style="left:542px;top:559px;width:92px;height:23px;background:#fff;border:1px solid #a9a9a9;border-bottom:none;border-radius:3px 3px 0 0"></div>
<svg class="a" style="left:310px;top:563.2px;" width="15" height="15" viewBox="0 0 16 16"><rect x=".6" y=".8" width="9.6" height="14.4" fill="#fff" stroke="#7f9fd0" stroke-width="1"/><circle cx="5" cy="4.6" r="3" fill="#e0283a"/><circle cx="4.2" cy="3.8" r="1" fill="#f58a94"/><path d="M2 14.8q0-5 3.2-5 3.2 0 3.2 5z" fill="#f2b63a" stroke="#d8952a" stroke-width=".5"/><path d="M10.2 1.2q3.6 1.2 2.4 5.6t2.4 8.4h-4.8" stroke="#9fb0cc" stroke-width="1" fill="#f1f4fa"/></svg>
<div class="t" style="left:329.9px;top:563.5px;letter-spacing:-0.023px;">Problems</div>
<div class="t" style="left:390.4px;top:562.5px;font-size:12.5px;color:#2f6fb8;letter-spacing:-1.203px;font-weight:bold;">@</div>
<div class="t" style="left:407.4px;top:563.5px;letter-spacing:-0.315px;">Javadoc</div>
<svg class="a" style="left:458.3px;top:563px;" width="16" height="16" viewBox="0 0 16 16"><path d="M1.2 .8h7l2.6 2.6v10H1.2z" fill="#fdf6e0" stroke="#c9a95a" stroke-width=".9"/><circle cx="5.6" cy="6.6" r="3" fill="none" stroke="#b08a3a" stroke-width="1"/><path d="M4.2 5.6h2.8M4.2 7.4h2.8" stroke="#5c8ad0" stroke-width=".9"/><path d="M7.5 9h3.5V7.4l4 3.3-4 3.3v-1.7H7.5z" fill="url(#gy)" stroke="#c8921c" stroke-width=".8" stroke-linejoin="round"/></svg>
<div class="t" style="left:477.9px;top:563.5px;letter-spacing:-0.064px;">Declaration</div>
<svg class="a" style="left:548px;top:563.6px;" width="14.5" height="14.5" viewBox="0 0 16 16"><rect x=".8" y="1" width="12.6" height="9.4" rx="1" fill="#2f5fae" stroke="#24498a" stroke-width=".8"/><rect x="2.4" y="2.8" width="9.4" height="5.4" fill="#eaf1fb"/><path d="M3.4 4.4h6M3.4 6.4h4" stroke="#5c7fb8" stroke-width=".9"/><rect x="5" y="10.6" width="4.2" height="1.6" fill="#5a6f96"/><rect x="2.4" y="12.2" width="9.4" height="1.8" rx=".6" fill="#3b5d98"/></svg>
<div class="t" style="left:565.9px;top:563.5px;letter-spacing:-0.076px;">Console</div>
<svg class="a" style="left:615.5px;top:566px;" width="11" height="11" viewBox="0 0 11 11"><path d="M.9 2.5L2.5 .9 5.5 3.9 8.5 .9 10.1 2.5 7.1 5.5 10.1 8.5 8.5 10.1 5.5 7.1 2.5 10.1 .9 8.5 3.9 5.5z" fill="#fff" stroke="#484848" stroke-width=".95"/></svg>
<div class="a" style="left:1045.5px;top:566px;width:11.5px;height:11px;background:#bdbdbd;border:1.5px solid #dadada"></div>
<svg class="a" style="left:1066.5px;top:563.5px;" width="15.5" height="15.5" viewBox="0 0 16 16"><path d="M1.5 4L4 1.5 8 5.2 12 1.5 14.5 4 10.6 8 14.5 12 12 14.5 8 10.8 4 14.5 1.5 12 5.4 8z" fill="#767676" stroke="#6a6a6a" stroke-width=".5" stroke-linejoin="round"/></svg>
<svg class="a" style="left:1089.5px;top:562.5px;" width="16" height="16" viewBox="0 0 16 16"><path d="M1 3L3 1 5.6 3.6 8.2 1 10.2 3 7.6 5.6 10.2 8.2 8.2 10.2 5.6 7.6 3 10.2 1 8.2 3.6 5.6z" fill="#f4f4f4" stroke="#8a8a8a" stroke-width=".8"/><path d="M5.5 8L8 5.5 10.8 8.2 13.6 5.5 16 8 13.2 10.8 16 13.6 13.6 16 10.8 13.2 8 16 5.5 13.6 8.2 10.8z" fill="#767676" stroke="#6a6a6a" stroke-width=".4"/></svg>
<div class="a" style="left:1111px;top:563px;width:1px;height:18px;background:#a0a0a0"></div>
<div class="t" style="left:309.9px;top:585px;"><span style="letter-spacing:0.158px">&lt;terminated&gt; </span><span style="letter-spacing:-0.111px">ParticipanteTeste </span><span style="letter-spacing:0.032px">[JUnit] </span><span style="letter-spacing:0.001px">C:\Program </span><span style="letter-spacing:-0.046px">Files\Java\jre7\bin\javaw.exe </span><span style="letter-spacing:-0.117px">(27/11/2014 </span><span style="letter-spacing:-0.647px">15:27:51)</span></div>
<!-- right stack -->
<div class="a" style="left:1102px;top:97px;width:21px;height:227px;background:#fff;border:1px solid #a4a4a4;border-radius:4px 0 0 0;border-top-color:#c4c4c4"></div>
<div class="a" style="left:1105px;top:123px;width:14px;height:50px;background:#f0f0f0"></div>
<svg class="a" style="left:1109px;top:102px;" width="12" height="14" viewBox="0 0 12 14"><path d="M.6 .6h12v11h-9l-1.5 2-1.5-2z" fill="#e6eaf8" stroke="#6a78a8" stroke-width="1"/><path d="M.4 1h12.4" stroke="#34344e" stroke-width="1.5"/><path d="M2.5 3.7h9M2.5 6.1h9M2.5 8.5h9" stroke="#2f3f6f" stroke-width="1"/></svg>
<svg class="a" style="left:1113px;top:128px;" width="8" height="12" viewBox="0 0 8 12"><path d="M.6 11V3.4L3.4 .6H8V11z" fill="#eef3fb" stroke="#8ea2c4" stroke-width="1"/></svg>
<div class="a" style="left:1108px;top:151px;width:14px;height:18px;background:#fff;border:1px solid #b4b4b4"></div>
<div class="a" style="left:1105px;top:258px;width:15px;height:65px;background:linear-gradient(90deg,#f1f5fb,#dfe9f7);border-top:1px solid #d8d4dc"></div>
<svg class="a" style="left:1111px;top:263px;" width="9" height="15" viewBox="0 0 9 15"><circle cx="7.5" cy="7.5" r="6.6" fill="#f4f8fd" stroke="#27467f" stroke-width="1.2"/><path d="M7.5 6.5v5M6 11.5h3M6.3 6.7h1.4" stroke="#27467f" stroke-width="1.5"/><circle cx="7.4" cy="4" r="1" fill="#27467f"/></svg>
<div class="a" style="left:1102px;top:328px;width:21px;height:112px;background:#fff;border:1px solid #a4a4a4;border-radius:4px 0 0 0"></div>
<svg class="a" style="left:1107px;top:333.5px;" width="12" height="15" viewBox="0 0 12 15"><rect x=".6" y=".6" width="5" height="5" fill="#cfe0f5" stroke="#3a6ab8" stroke-width="1.1"/><rect x=".6" y="8.8" width="5" height="5" fill="#cfe0f5" stroke="#3a6ab8" stroke-width="1.1"/><path d="M6.5 3.1h5M6.5 11.3h5" stroke="#3a6ab8" stroke-width="1.1"/><rect x="7.6" y="6" width="2.4" height="2.4" fill="#fff" stroke="#3a6ab8" stroke-width=".9"/></svg>
<div class="a" style="left:1105px;top:354px;width:14px;height:22px;background:#f0f0f0"></div>
<div class="a" style="left:1116px;top:385px;width:3px;height:1.2px;background:#777"></div>
<div class="a" style="left:1102px;top:444px;width:21px;height:111px;background:#fff;border:1px solid #a4a4a4;border-radius:4px 0 0 0"></div>
<svg class="a" style="left:1106.5px;top:448.5px;" width="12" height="14" viewBox="0 0 12 14"><defs><linearGradient id="lf" x1="0" y1="0" x2="1" y2="1"><stop offset="0" stop-color="#d6e85a"/><stop offset="1" stop-color="#8fba2a"/></linearGradient></defs><path d="M0 12L4 6q2-5 8-5v9q-4-1-7 1z" fill="url(#lf)" stroke="#8aa82a" stroke-width=".6"/><path d="M0 13l4-5" stroke="#c87a2a" stroke-width="1.2"/><rect x="8.5" y="9.5" width="4" height="4.5" fill="#fff" stroke="#a8502a" stroke-width=".9"/></svg>
<div class="a" style="left:1105px;top:470px;width:14px;height:22px;background:#f0f0f0"></div>
</body></html>
